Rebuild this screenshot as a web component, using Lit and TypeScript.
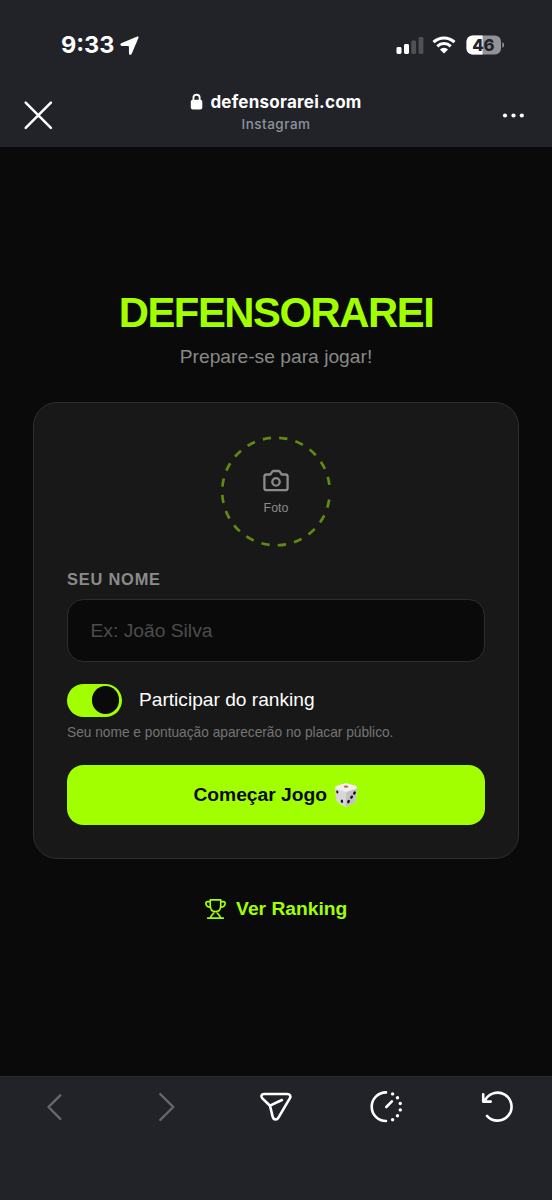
import { LitElement, html, css } from "lit";
import { customElement, state } from "lit/decorators.js";

@customElement("status-bar")
class StatusBar extends LitElement {
  static styles = css`
    :host { display: flex; height: 90px; box-sizing: border-box; padding: 0 47.500px 0 61px; align-items: center; justify-content: space-between; color: #fff; }
    .side { display: flex; align-items: center; }
    .time { font: 700 23.5px/30px Inter, sans-serif; letter-spacing: 0; }
    .arrow { margin-left: 5px; }
    .wifi { margin-left: 8.500px; }
    .battery { margin-left: 9.500px; }
    svg { display: block; }
    text { font: 800 16.600px Inter, sans-serif; letter-spacing: -0.2px; }
  `;
  render() {
    return html`
      <div class="side">
        <span class="time">9:33</span>
        <svg class="arrow" width="21" height="21" viewBox="0 0 21 21"><path d="M18.200 1.500c1-.4 1.700.4 1.300 1.300l-6.900 16.100c-.7 1.500-2.600 1.200-2.600-.5l-.1-6.600c0-.5-.2-.7-.7-.7l-6.400-.1C1.100 10.900.8 8.900 2.200 8.300z" fill="#fff"/></svg>
      </div>
      <div class="side">
        <svg width="28" height="20" viewBox="0 0 28 20">
          <rect x="0.500" y="12" width="5" height="7" rx="1.400" fill="#fff"/>
          <rect x="8" y="9" width="5" height="10" rx="1.400" fill="#fff"/>
          <rect x="15.300" y="5.500" width="4.800" height="13.500" rx="1.400" fill="#505155"/>
          <rect x="22.600" y="2" width="4.800" height="17" rx="1.400" fill="#505155"/>
        </svg>
        <svg class="wifi" width="24" height="20" viewBox="0 0 24 20">
          <g fill="none" stroke="#fff" stroke-width="3">
            <path d="M1.500 7.100a15.200 15.200 0 0 1 21 0"/>
            <path d="M5.300 11.300a9.700 9.700 0 0 1 13.400 0"/>
          </g>
          <path d="M12 18.600 7.900 14.500a5.900 5.900 0 0 1 8.200 0z" fill="#fff"/>
        </svg>
        <svg class="battery" width="39" height="20" viewBox="0 0 39 20">
          <rect x="0.500" y="0.500" width="34.500" height="19" rx="6" fill="#929397"/>
          <path d="M6.500 .5h10.100v19H6.500a6 6 0 0 1-6-6v-7a6 6 0 0 1 6-6z" fill="#fff"/>
          <path d="M36.300 7.300q1.900.7 1.900 2.700t-1.900 2.700z" fill="#929397"/>
          <text x="17.300" y="16" text-anchor="middle" fill="#222328">46</text>
        </svg>
      </div>`;
  }
}

@customElement("browser-header")
class BrowserHeader extends LitElement {
  static styles = css`
    :host { display: grid; grid-template-columns: 76px 1fr 76px; height: 57px; color: #fff; }
    svg { display: block; }
    .close { margin: 10px 0 0 23px; }
    .more { margin: 22px 0 0 26px; }
    .center { display: flex; flex-direction: column; align-items: center; }
    .site { display: flex; align-items: center; height: 24px; gap: 7px; font: 700 17px/24px Inter, sans-serif; letter-spacing: 0.240px; }
    .app { font: 500 13.500px/20px Inter, sans-serif; letter-spacing: 0.500px; color: #8c939e; }
  `;
  render() {
    return html`
      <svg class="close" width="30" height="30" viewBox="0 0 30 30"><path d="m2.700 2.700 25.200 25.200M27.900 2.700 2.700 27.900" stroke="#fff" stroke-width="2.500" stroke-linecap="round"/></svg>
      <div class="center">
        <div class="site">
          <svg width="13" height="18" viewBox="0 0 13 18"><rect x=".8" y="6.700" width="11.500" height="9.900" rx="2" fill="#fff"/><path d="M3.400 8V4.900a3.150 3.150 0 0 1 6.300 0V8" fill="none" stroke="#fff" stroke-width="1.800"/></svg>
          <span>defensorarei.com</span>
        </div>
        <div class="app">Instagram</div>
      </div>
      <svg class="more" width="24" height="8" viewBox="0 0 24 8" fill="#fff"><circle cx="3" cy="3.500" r="2.100"/><circle cx="11.500" cy="3.500" r="2.100"/><circle cx="19.800" cy="3.500" r="2.100"/></svg>`;
  }
}

@customElement("player-form")
class PlayerForm extends LitElement {
  @state() private ranking = true;

  static styles = css`
    :host { display: flex; flex-direction: column; box-sizing: border-box; width: 486px; height: 457px; padding: 33px 33px 0; border: 1.400px solid #2e2e2e; border-radius: 24px; background: #181818; }
    svg { display: block; }
    .photo { display: grid; align-self: center; width: 112px; height: 111px; }
    .ring, .photo-inner { grid-area: 1 / 1; }
    .photo-inner { display: flex; flex-direction: column; align-items: center; padding-top: 32px; gap: 6px; font-size: 12.400px; line-height: 16px; color: #8b8b8b; }
    .label { margin-top: 20px; font-size: 16.400px; line-height: 24px; font-weight: 700; letter-spacing: 0.800px; color: #8b8b8b; }
    .field { box-sizing: border-box; width: 418px; height: 63px; margin-top: 8px; padding: 0 22.500px; border: 1.400px solid #2e2e2e; border-radius: 16.500px; background: #0a0a0a; color: #fff; font: 19.250px "Liberation Sans", sans-serif; outline: none; }
    .field::placeholder { color: #4c4c4c; opacity: 1; }
    .switch-row { display: flex; align-items: center; gap: 17px; height: 34px; margin-top: 21px; font-size: 19.150px; color: #fff; }
    .toggle { display: flex; box-sizing: border-box; width: 55px; height: 33px; padding: 2.700px; border-radius: 17px; background: #555; }
    .toggle.on { justify-content: flex-end; background: #a2ff00; }
    .knob { width: 27.600px; height: 27.600px; border-radius: 50%; background: #0a0a0a; }
    .hint { margin-top: 6px; font-size: 13.730px; line-height: 20px; white-space: nowrap; color: #747474; }
    .start { display: flex; align-items: center; justify-content: center; gap: 5.500px; width: 418px; height: 60px; margin-top: 22px; padding: 0; border: 0; border-radius: 16.500px; background: #a2ff00; color: #0a0a0a; font: 700 19.250px "Liberation Sans", sans-serif; }
  `;
  render() {
    return html`
      <div class="photo">
        <svg class="ring" width="112" height="112" viewBox="0 0 112 112"><circle cx="56" cy="55.500" r="53.800" fill="none" stroke="#5e8b10" stroke-width="2.700" stroke-dasharray="8.300 8.250" stroke-dashoffset="-8.100"/></svg>
        <div class="photo-inner">
          <svg width="28" height="26" viewBox="0 0 28 26" fill="none" stroke="#8b8b8b" stroke-width="2.300" stroke-linejoin="round"><path d="M4.600 6.500h3.700l2-2.800q.5-.7 1.200-.7h5q.7 0 1.200.7l2 2.800h3.700q2.200 0 2.200 2.200v11.300q0 2.200-2.200 2.200H4.600q-2.200 0-2.200-2.200V8.700q0-2.200 2.200-2.200z"/><circle cx="14" cy="13.900" r="3.700"/></svg>
          <span>Foto</span>
        </div>
      </div>
      <div class="label">SEU NOME</div>
      <input class="field" placeholder="Ex: João Silva" />
      <div class="switch-row">
        <div class="toggle ${this.ranking ? "on" : ""}" @click=${() => (this.ranking = !this.ranking)}><div class="knob"></div></div>
        <span>Participar do ranking</span>
      </div>
      <div class="hint">Seu nome e pontuação aparecerão no placar público.</div>
      <button class="start">
        <span>Começar Jogo</span>
        <svg width="26" height="26" viewBox="0 0 26 26">
          <path d="M2 6.200Q1.600 4.500 3.600 3.900L11.500 1.500q1.200-.3 2.400 0l8.600 2.300q2 .6 1.700 2.400l-1.600 12.600q-.2 1.500-1.500 2.100l-7.200 3.500q-1 .5-2 0l-7-4.200q-1.100-.7-1.300-2z" fill="#e5e3e4"/>
          <path d="M2 6.200q.2.600 1.200.9l8.900 2.800q.8.300 1 1.400l-.3 13.200q-.5.200-1-.1l-7-4.200q-1.100-.7-1.300-2z" fill="#d8d6d7"/>
          <path d="M24.100 6q-.2.700-1 1l-8.800 2.800q-1 .3-1.100 1.400l-.4 13.300q.6.100 1.100-.1l7.200-3.500q1.300-.6 1.500-2.100z" fill="#c2c0c2"/>
          <path d="M3.600 3.900 11.500 1.500q1.200-.3 2.400 0l8.600 2.300q2 .6.500 2.700l-8.500 2.800q-1.300.4-2.600 0L3 6.500Q1.500 4.500 3.600 3.900z" fill="#f1eff0"/>
          <ellipse cx="13" cy="4.700" rx="2.200" ry="1.100" fill="#ca6353"/>
          <g fill="#171717"><ellipse cx="4.300" cy="10" rx="1" ry="1.600" transform="rotate(-15 4.300 10)"/><ellipse cx="8.900" cy="19.300" rx="1.200" ry="1.700" transform="rotate(-15 8.900 19.300)"/>
          <ellipse cx="21.500" cy="11.100" rx="1.300" ry="1.800" transform="rotate(28 21.500 11.100)"/><ellipse cx="18.600" cy="15.200" rx="1.300" ry="1.800" transform="rotate(28 18.600 15.200)"/><ellipse cx="15.500" cy="19.600" rx="1.300" ry="1.800" transform="rotate(28 15.500 19.600)"/></g>
        </svg>
      </button>`;
  }
}

@customElement("browser-toolbar")
class BrowserToolbar extends LitElement {
  static styles = css`
    :host { display: grid; grid-template-columns: repeat(5, 1fr); box-sizing: border-box; height: 124px; padding-top: 12px; border-top: 1px solid #2a2b30; background: #222328; justify-items: center; }
    svg { display: block; fill: none; stroke: #fff; stroke-width: 2.600; stroke-linecap: round; stroke-linejoin: round; }
    .dim { stroke: #66676c; stroke-width: 2.400; }
    .dots { fill: #fff; stroke: none; }
  `;
  render() {
    return html`
      <svg class="dim" width="36" height="36" viewBox="0 0 36 36"><path d="M23.300 6.300 11.500 18l11.800 11.800"/></svg>
      <svg class="dim" width="36" height="36" viewBox="0 0 36 36"><path d="M12.300 5.100 25.300 18l-13 12.800"/></svg>
      <svg width="36" height="36" viewBox="0 0 36 36"><path d="M6 5h23.300c2.600 0 3.800 2 2.600 4.200L20.300 28.800c-1.500 2.500-4.900 2-5.600-.9L12 16.700 4.400 9.400C2.500 7.500 3.400 5 6 5zM12 16.700 23.900 11"/></svg>
      <svg width="36" height="36" viewBox="0 0 36 36"><path d="M18 3.400a14.300 14.300 0 0 0 0 28.600M18.300 18l5.600-5.600"/><g class="dots"><circle cx="24.600" cy="4.900" r="1.700"/><circle cx="29.500" cy="8.800" r="1.700"/><circle cx="32.300" cy="14.500" r="1.700"/><circle cx="32.300" cy="20.900" r="1.700"/><circle cx="29.500" cy="26.700" r="1.700"/><circle cx="24.600" cy="30.700" r="1.700"/></g></svg>
      <svg width="36" height="36" viewBox="0 0 36 36"><path d="M8 26.900A14 14 0 1 0 5.600 12.300M4.200 5.200v7.400h7.500"/></svg>`;
  }
}

@customElement("app-root")
class AppRoot extends LitElement {
  static styles = css`
    :host { display: flex; flex-direction: column; width: 552px; height: 1200px; overflow: hidden; background: #0a0a0a; font-family: "Liberation Sans", Arial, sans-serif; }
    .top { height: 147px; background: #222328; }
    .main { display: flex; flex: 1; flex-direction: column; align-items: center; }
    .title { margin: 141px 0 0; font-size: 41.800px; line-height: 50px; font-weight: 700; letter-spacing: -1.450px; color: #a2ff00; }
    .subtitle { margin: 7px 0 33px; font-size: 19.250px; line-height: 24px; color: #888; }
    .ranking { display: flex; align-items: center; gap: 10.500px; height: 28px; margin-top: 36px; font-size: 19.250px; font-weight: 700; color: #a2ff00; }
    svg { display: block; }
  `;
  render() {
    return html`
      <div class="top"><status-bar></status-bar><browser-header></browser-header></div>
      <div class="main">
        <h1 class="title">DEFENSORAREI</h1>
        <p class="subtitle">Prepare-se para jogar!</p>
        <player-form></player-form>
        <div class="ranking">
          <svg width="21" height="22" viewBox="0 0 22 22" fill="none" stroke="#a2ff00" stroke-width="1.800" stroke-linejoin="round" stroke-linecap="round"><path d="M5.500 1.500h11v5.600c0 4-2.100 6.700-5.500 6.700S5.500 11.100 5.500 7.100zM5.500 3.200H3.200C.8 3.200.8 4.600 1 5.700c.3 2.200 2.300 3.400 4.800 3.500M16.500 3.200h2.300c2.400 0 2.400 1.400 2.200 2.500-.3 2.200-2.300 3.400-4.800 3.500M9.500 13.800c0 3.100-3.700 3-3.700 6.600M12.500 13.800c0 3.100 3.700 3 3.700 6.600M2.800 20.500h16.400"/></svg>
          <span>Ver Ranking</span>
        </div>
      </div>
      <browser-toolbar></browser-toolbar>`;
  }
}
